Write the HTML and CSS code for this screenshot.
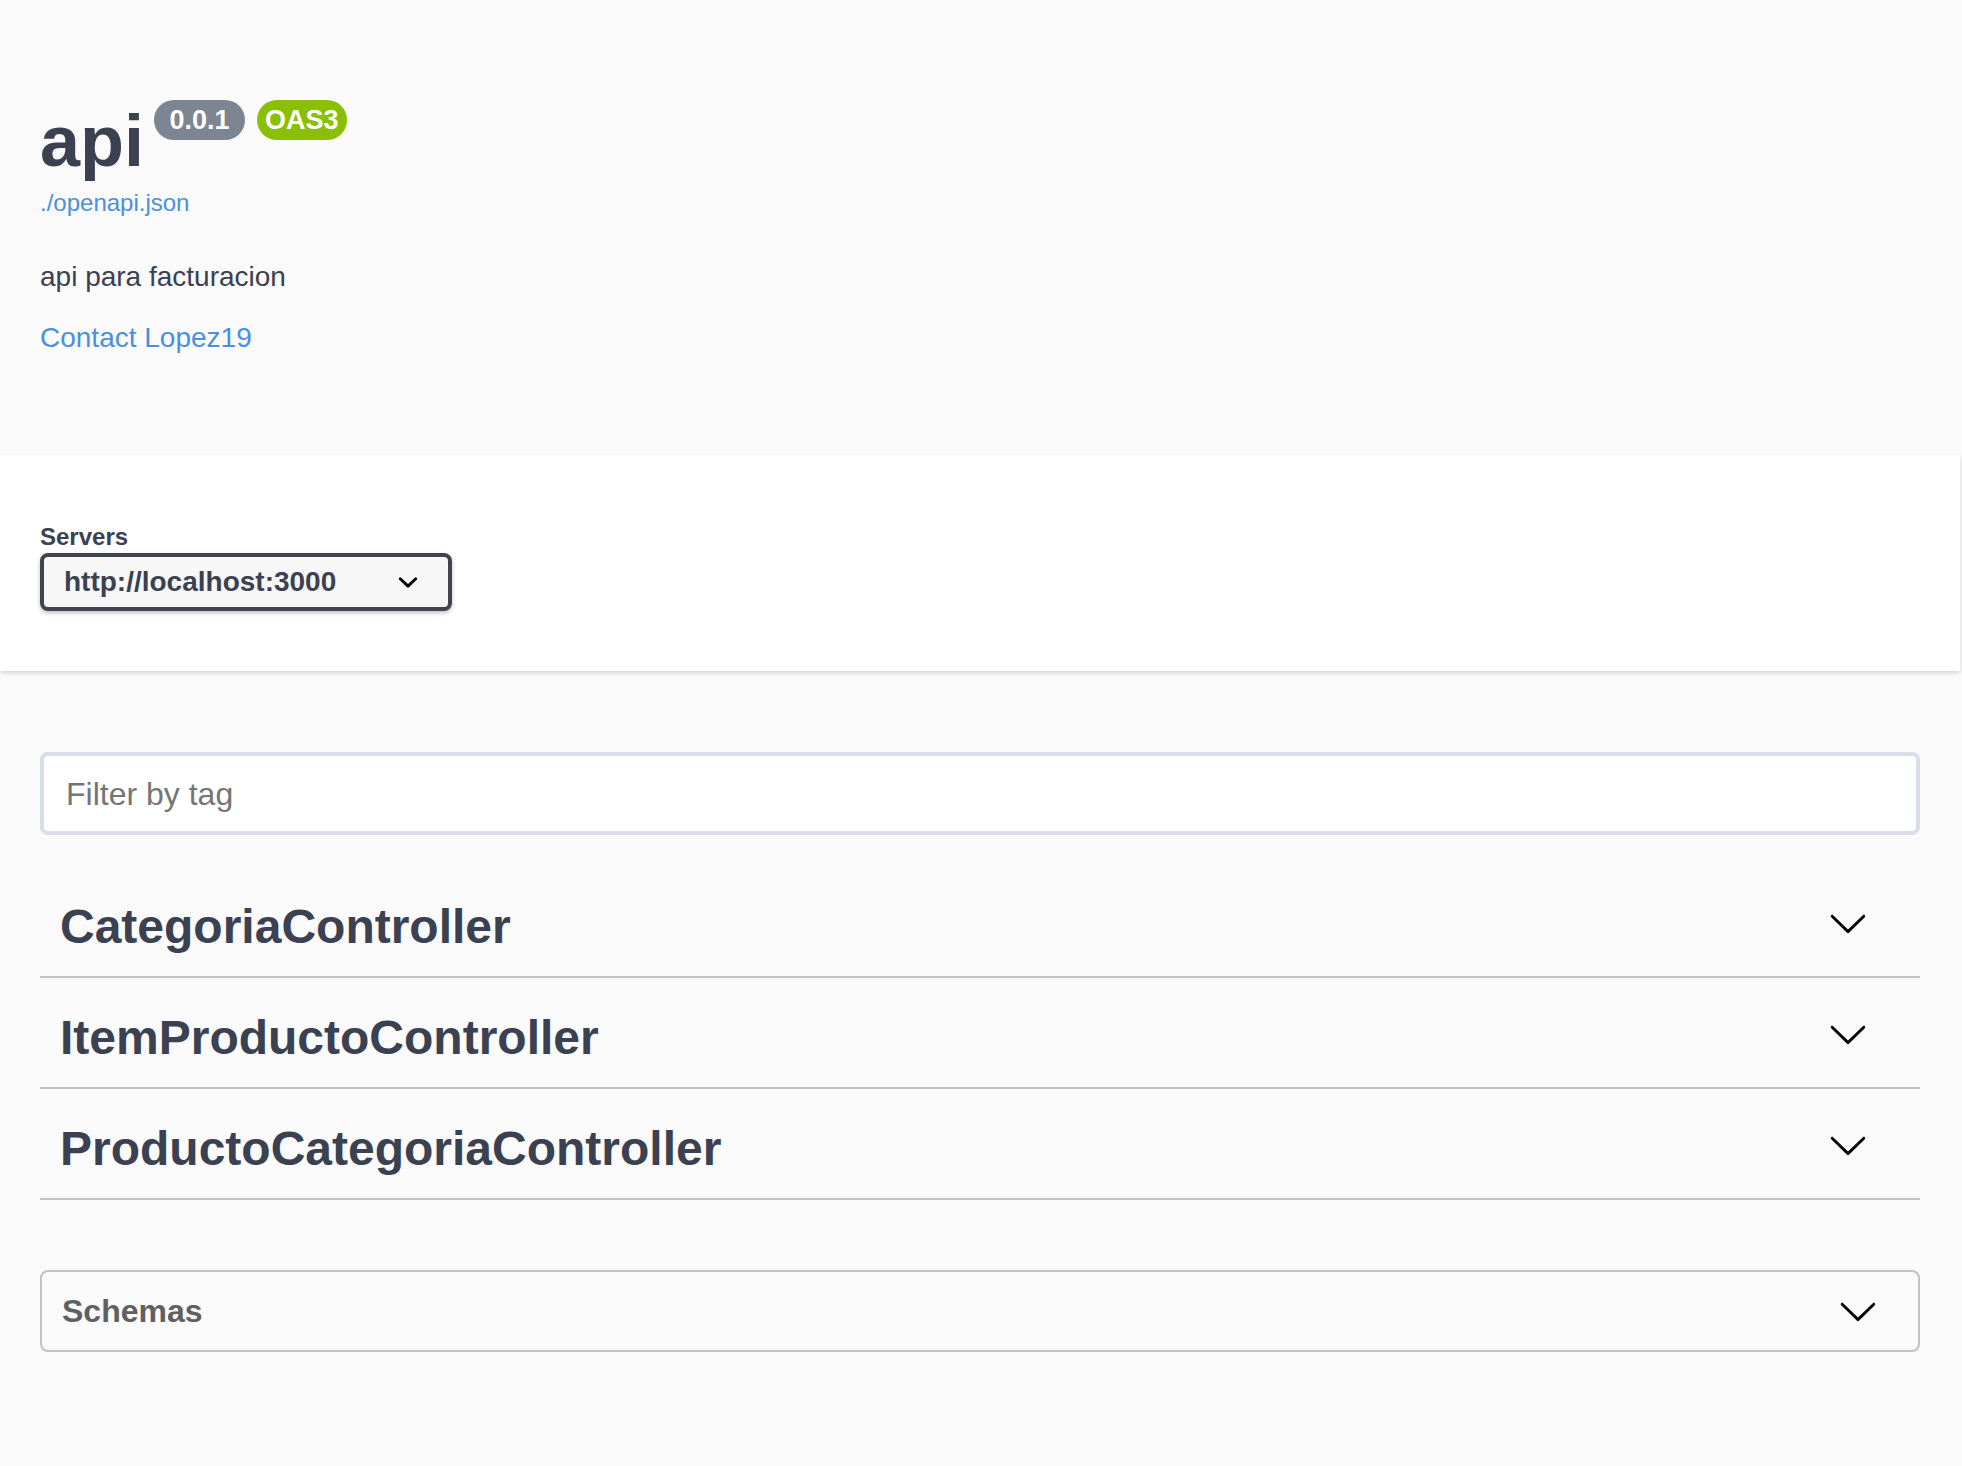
FILE: index.html
```html
<!DOCTYPE html>
<html lang="es">
<head>
<meta charset="utf-8">
<title>Swagger UI</title>
<link rel="stylesheet" href="styles.css">
</head>
<body>
<div class="page">
  <div class="wrapper">
    <section class="info">
      <hgroup class="main">
        <h2 class="title">api<span class="badges"><small class="badge version"><pre> 0.0.1 </pre></small><small class="badge stamp"><pre>OAS3</pre></small></span></h2>
        <div class="url-line"><a class="link" href="#">./openapi.json</a></div>
      </hgroup>
      <div class="description"><p>api para facturacion</p></div>
      <div class="contact"><a class="link contact-link" href="#">Contact Lopez19</a></div>
    </section>
  </div>

  <div class="scheme-container">
    <div class="wrapper">
      <div class="servers-line"><span class="servers-title">Servers</span></div>
      <div class="select">
        <span class="select-text">http://localhost:3000</span>
        <svg class="select-arrow" viewBox="0 0 20 20" width="40" height="40"><path d="M13.418 7.859a.695.695 0 0 1 .978 0 .68.68 0 0 1 0 .969l-3.908 3.83a.697.697 0 0 1-.979 0l-3.908-3.830a.68.68 0 0 1 0-.969.695.695 0 0 1 .978 0L10 11l3.418-3.141z"/></svg>
      </div>
    </div>
  </div>

  <div class="wrapper">
    <input class="filter-input" type="text" placeholder="Filter by tag">

    <div class="tag-section">
      <h3 class="opblock-tag"><span class="tag-name">CategoriaController</span>
        <span class="expand"><svg class="arrow" viewBox="0 0 20 20" width="40" height="40"><path d="M17.418 6.109c.272-.268.709-.268.979 0s.271.701 0 .969l-7.908 7.83c-.27.268-.707.268-.979 0l-7.908-7.830c-.27-.268-.27-.701 0-.969.271-.268.709-.268.979 0L10 13.25l7.418-7.141z"/></svg></span>
      </h3>
    </div>
    <div class="tag-section">
      <h3 class="opblock-tag"><span class="tag-name">ItemProductoController</span>
        <span class="expand"><svg class="arrow" viewBox="0 0 20 20" width="40" height="40"><path d="M17.418 6.109c.272-.268.709-.268.979 0s.271.701 0 .969l-7.908 7.83c-.27.268-.707.268-.979 0l-7.908-7.830c-.27-.268-.27-.701 0-.969.271-.268.709-.268.979 0L10 13.25l7.418-7.141z"/></svg></span>
      </h3>
    </div>
    <div class="tag-section">
      <h3 class="opblock-tag"><span class="tag-name">ProductoCategoriaController</span>
        <span class="expand"><svg class="arrow" viewBox="0 0 20 20" width="40" height="40"><path d="M17.418 6.109c.272-.268.709-.268.979 0s.271.701 0 .969l-7.908 7.83c-.27.268-.707.268-.979 0l-7.908-7.830c-.27-.268-.27-.701 0-.969.271-.268.709-.268.979 0L10 13.25l7.418-7.141z"/></svg></span>
      </h3>
    </div>

    <section class="models">
      <h4 class="models-title"><span>Schemas</span>
        <svg class="models-arrow" viewBox="0 0 20 20" width="40" height="40"><path d="M17.418 6.109c.272-.268.709-.268.979 0s.271.701 0 .969l-7.908 7.83c-.27.268-.707.268-.979 0l-7.908-7.830c-.27-.268-.27-.701 0-.969.271-.268.709-.268.979 0L10 13.25l7.418-7.141z"/></svg>
      </h4>
    </section>
  </div>
</div>
</body>
</html>
```

FILE: styles.css
```css
html, body {
  margin: 0;
  padding: 0;
  background: #fafafa;
}

body {
  font-family: "Liberation Sans", Arial, sans-serif;
  color: #3b4151;
}

.page {
  width: 1960px;
}

.wrapper {
  box-sizing: border-box;
  padding: 0 40px;
  width: 100%;
}

/* ---------- info ---------- */
.info {
  margin: 100px 0 100px;
}

.main {
  margin: 0 0 42px;
}

.title {
  display: flex;
  align-items: flex-start;
  margin: 0;
  font-size: 72px;
  font-weight: 700;
  line-height: normal;
  color: #3b4151;
}

.badges {
  display: flex;
  align-items: flex-start;
}

.badge {
  display: block;
  margin-left: 10px;
  padding: 4px 8px;
  border-radius: 114px;
  background: #7d8492;
  font-size: 27px;
  line-height: 32px;
}

.badge.stamp {
  margin-left: 12px;
  background: #89bf04;
}

.badge pre {
  margin: 0;
  padding: 0;
  font-family: "Liberation Sans", Arial, sans-serif;
  font-size: 27px;
  font-weight: 700;
  color: #fff;
  line-height: 32px;
}

.url-line {
  font-size: 32px;
  line-height: normal;
}

.link {
  color: #4990e2;
  text-decoration: none;
  font-size: 24px;
}

.description p {
  margin: 24px 0;
  font-size: 28px;
  line-height: normal;
  color: #3b4151;
}

.contact {
  margin-top: 25px;
  font-size: 32px;
  line-height: normal;
}

.contact-link {
  font-size: 28px;
}

/* ---------- servers ---------- */
.scheme-container {
  background: #fff;
  box-shadow: 0 2px 4px 0 rgba(0, 0, 0, 0.15);
  padding: 60px 0;
  margin: 0;
}

.servers-line {
  padding-top: 1px;
  font-size: 32px;
  line-height: normal;
}

.servers-title {
  font-size: 24px;
  font-weight: 700;
  color: #3b4151;
}

.select {
  box-sizing: border-box;
  display: flex;
  align-items: center;
  justify-content: space-between;
  width: 412px;
  height: 58px;
  margin-bottom: 0;
  padding: 0 20px;
  border: 4px solid #41444e;
  border-radius: 8px;
  background: #f7f7f7;
  box-shadow: 0 2px 4px 0 rgba(0, 0, 0, 0.25);
}

.select-text {
  font-size: 28px;
  font-weight: 700;
  line-height: normal;
  color: #3b4151;
}

.select-arrow {
  display: block;
  fill: #000;
}

/* ---------- filter ---------- */
.filter-input {
  display: block;
  box-sizing: border-box;
  width: 100%;
  height: 83px;
  margin: 81px 0 42px;
  padding: 21px 22px 20px;
  border: 4px solid #d8dde7;
  border-radius: 8px;
  background: #fff;
  font-family: "Liberation Sans", Arial, sans-serif;
  font-size: 32px;
  color: #3b4151;
  outline: none;
}

.filter-input::placeholder {
  color: #757575;
}

/* ---------- tags ---------- */
.tag-section {
  margin: 0 0 10px;
}

.opblock-tag {
  box-sizing: border-box;
  display: flex;
  align-items: center;
  justify-content: space-between;
  height: 101px;
  margin: 0;
  padding: 20px 40px 20px 20px;
  border-bottom: 2px solid rgba(59, 65, 81, 0.3);
  font-size: 48px;
  font-weight: 700;
  line-height: 59px;
  color: #3b4151;
}

.expand {
  display: block;
  padding: 0 12px;
}

.arrow {
  display: block;
  margin-bottom: 8px;
  fill: #000;
}

/* ---------- models ---------- */
.models {
  margin: 70px 0 60px;
  border: 2px solid rgba(59, 65, 81, 0.3);
  border-radius: 8px;
}

.models-title {
  box-sizing: border-box;
  display: flex;
  align-items: center;
  justify-content: space-between;
  height: 78px;
  margin: 0;
  padding: 20px 40px 20px 20px;
  font-size: 32px;
  font-weight: 700;
  line-height: normal;
  color: #606060;
}

.models-arrow {
  display: block;
  fill: #000;
}
```
